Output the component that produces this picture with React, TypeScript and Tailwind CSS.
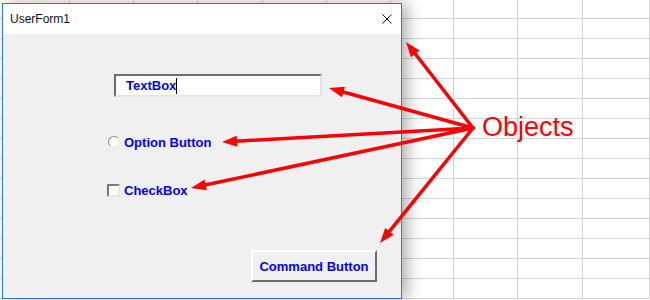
import React from "react";

// ─── Sheet grid behind the form ───────────────────────────────────────────────

const COL_WIDTHS = [70, 64, 64, 65, 64, 64, 63, 64, 65, 67];
const ROW_HEIGHTS = [20, 20, 20, 20, 20, 20, 20, 20, 20, 20, 20, 20, 20, 20, 20];

function SheetGrid() {
  return (
    <div className="flex flex-col -mt-px">
      {ROW_HEIGHTS.map((h, r) => (
        <div key={r} className="flex">
          {COL_WIDTHS.map((w, c) => (
            <div
              key={c}
              className="shrink-0 border-b border-r border-[#d4d4d4] bg-white"
              style={{ width: w, height: h }}
            />
          ))}
        </div>
      ))}
    </div>
  );
}

// ─── Annotation arrows ────────────────────────────────────────────────────────

const ORIGIN = { x: 473, y: 128 };
const TIPS = [
  { x: 406, y: 42 },
  { x: 329, y: 88 },
  { x: 222, y: 142 },
  { x: 191, y: 188 },
  { x: 380, y: 243 },
];

function Arrow({ to }: { to: { x: number; y: number } }) {
  const dx = to.x - ORIGIN.x;
  const dy = to.y - ORIGIN.y;
  const len = Math.hypot(dx, dy);
  const ux = dx / len;
  const uy = dy / len;
  const head = 15;
  const half = 5.5;
  const bx = to.x - ux * head;
  const by = to.y - uy * head;
  const pts = [
    `${to.x},${to.y}`,
    `${bx - uy * half},${by + ux * half}`,
    `${bx + uy * half},${by - ux * half}`,
  ].join(" ");
  return (
    <g>
      <line
        x1={ORIGIN.x}
        y1={ORIGIN.y}
        x2={bx + ux * 2}
        y2={by + uy * 2}
        stroke="#ff0000"
        strokeWidth={3.5}
        strokeLinecap="round"
      />
      <polygon points={pts} fill="#ff0000" />
    </g>
  );
}

// ─── UserForm window ──────────────────────────────────────────────────────────

function UserForm() {
  const label = "text-[13px] font-bold text-[#0000ff] font-['Liberation_Sans',Arial,sans-serif] leading-none";
  return (
    <div className="absolute left-[2px] top-[3px] flex h-[296px] w-[400px] flex-col border border-[#2b7bd4] bg-white shadow-[6px_0_14px_rgba(0,0,0,0.3)]">
      {/* Title bar */}
      <div className="flex h-[30px] shrink-0 items-center justify-between bg-white pl-[7px] pr-[9px]">
        <span className="text-[12px] text-[#111] font-['Liberation_Sans',Arial,sans-serif]">
          UserForm1
        </span>
        <svg width="10" height="10" viewBox="0 0 10 10">
          <path d="M0.5 0.5 L9.5 9.5 M9.5 0.5 L0.5 9.5" stroke="#111" strokeWidth="1" />
        </svg>
      </div>

      {/* Form body */}
      <div className="flex flex-1 flex-col items-start bg-[#f0f0f0]">
        <div className="ml-[111px] mt-[40px] flex h-[23px] w-[208px] items-center border-2 border-t-[#6e6e6e] border-l-[#6e6e6e] border-b-[#e4e4e4] border-r-[#e4e4e4] bg-white pl-[10px]">
          <span className={label}>TextBox</span>
          <span className="h-[16px] w-px bg-black" />
        </div>

        <div className="ml-[105px] mt-[37px] flex h-4 items-center gap-[4px]">
          <span className="h-[12px] w-[12px] rounded-full border border-t-[#8a8a8a] border-l-[#8a8a8a] border-b-[#e6e6e6] border-r-[#e6e6e6] bg-white" />
          <span className={label}>Option Button</span>
        </div>

        <div className="ml-[104px] mt-[32px] flex h-4 items-center gap-[4px]">
          <span className="h-[13px] w-[13px] border-2 border-t-[#7a7a7a] border-l-[#7a7a7a] border-b-[#e6e6e6] border-r-[#e6e6e6] bg-white" />
          <span className={label}>CheckBox</span>
        </div>

        <button className="ml-[248px] mt-[52px] flex h-[32px] w-[126px] items-center justify-center border-2 border-t-white border-l-white border-b-[#6e6e6e] border-r-[#6e6e6e] bg-[#f0f0f0]">
          <span className={label}>Command Button</span>
        </button>
      </div>
    </div>
  );
}

// ─── Page ─────────────────────────────────────────────────────────────────────

export default function App() {
  return (
    <div className="relative h-[300px] w-[650px] overflow-hidden bg-white">
      <SheetGrid />
      <UserForm />
      <svg className="absolute left-0 top-0" width="650" height="300">
        {TIPS.map((t, i) => (
          <Arrow key={i} to={t} />
        ))}
      </svg>
      <span className="absolute left-[482px] top-[114px] text-[27px] leading-none text-[#ff0000] font-['Liberation_Sans',Arial,sans-serif]">
        Objects
      </span>
    </div>
  );
}
